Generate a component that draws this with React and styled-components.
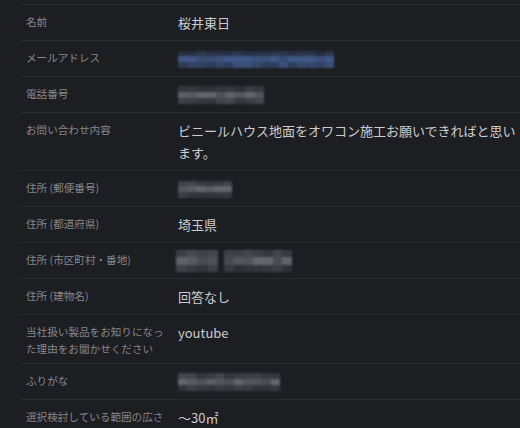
import React from "react";
import styled, { createGlobalStyle } from "styled-components";

const GlobalStyle = createGlobalStyle`
  html, body {
    margin: 0;
    padding: 0;
    background: #1d1e22;
    overflow: hidden;
  }
  body {
    font-family: "Noto Sans CJK JP", "Noto Sans", sans-serif;
  }
`;

// 値を伏せるためのモザイク (行ごとの明るさ × セル)
const makeMosaic = (cols, rows, base, seed) => {
  let s = seed;
  const rnd = () => {
    s = (s * 9301 + 49297) % 233280;
    return s / 233280;
  };
  return rows.map((rowLevel) =>
    Array.from({ length: cols }, () => {
      const v = rowLevel * (0.7 + rnd() * 0.6);
      return `rgba(${base[0]}, ${base[1]}, ${base[2]}, ${Math.min(v, 1).toFixed(2)})`;
    })
  );
};

const gray = [100, 102, 108];

const rows = [
  { label: "名前", value: "桜井東日" },
  {
    label: "メールアドレス",
    mosaic: { w: 156, h: 17, cols: 17, levels: [0.35, 1, 0.7], base: [62, 88, 135], seed: 3 },
  },
  {
    label: "電話番号",
    mosaic: { w: 86, h: 18, cols: 9, levels: [0.35, 0.95, 0.45], base: gray, seed: 7 },
  },
  {
    label: "お問い合わせ内容",
    value: "ビニールハウス地面をオワコン施工お願いできればと思います。",
  },
  {
    label: "住所 (郵便番号)",
    mosaic: { w: 54, h: 17, cols: 6, levels: [0.45, 0.95, 0.35], base: gray, seed: 11 },
  },
  { label: "住所 (都道府県)", value: "埼玉県" },
  {
    label: "住所 (市区町村・番地)",
    mosaics: [
      { w: 42, h: 22, cols: 4, levels: [0.5, 0.9, 0.4], base: gray, seed: 5 },
      { w: 68, h: 22, cols: 7, levels: [0.45, 0.85, 0.35], base: gray, seed: 13 },
    ],
  },
  { label: "住所 (建物名)", value: "回答なし" },
  { label: "当社扱い製品をお知りになった理由をお聞かせください", value: "youtube" },
  {
    label: "ふりがな",
    mosaic: { w: 102, h: 18, cols: 11, levels: [0.45, 0.9, 0.4], base: gray, seed: 17 },
  },
  { label: "選択検討している範囲の広さを記入してください", value: "～30㎡" },
];

const Mosaic = ({ w, h, cols, levels, base, seed }) => {
  const grid = makeMosaic(cols, levels, base, seed);
  return (
    <MosaicBox $w={w} $h={h}>
      {grid.map((line, i) => (
        <MosaicRow key={i}>
          {line.map((c, j) => (
            <Cell key={j} style={{ background: c }} />
          ))}
        </MosaicRow>
      ))}
    </MosaicBox>
  );
};

const App = () => {
  return (
    <>
      <GlobalStyle />
      <List>
        {rows.map((r) => (
          <Row key={r.label}>
            <Label>{r.label}</Label>
            <Value>
              {r.value}
              {r.mosaic && <Mosaic {...r.mosaic} />}
              {r.mosaics && (
                <MosaicGroup>
                  {r.mosaics.map((m, i) => (
                    <Mosaic key={i} {...m} />
                  ))}
                </MosaicGroup>
              )}
            </Value>
          </Row>
        ))}
      </List>
    </>
  );
};

export default App;

const List = styled.div`
  padding: 4px 0 0 20px;
`;

const Row = styled.div`
  display: flex;
  align-items: flex-start;
  border-top: 1px solid #2a2b30;
  padding: 7px 0 6px 0;
`;

const Label = styled.div`
  width: 146px;
  padding-left: 6px;
  margin-right: 6px;
  flex-shrink: 0;
  font-size: 10.6px;
  line-height: 17px;
  color: #85878c;
  padding-top: 1px;
`;

const Value = styled.div`
  flex: 1;
  padding-right: 2px;
  font-size: 13px;
  line-height: 22px;
  color: #cbccd0;
  min-height: 22px;
  display: flex;
  align-items: center;
  flex-wrap: wrap;
`;

const MosaicGroup = styled.div`
  display: flex;
  gap: 6px;
  margin-left: -2px;
`;

const MosaicBox = styled.div`
  width: ${(p) => p.$w}px;
  height: ${(p) => p.$h}px;
  display: flex;
  flex-direction: column;
  filter: blur(1px);
`;

const MosaicRow = styled.div`
  flex: 1;
  display: flex;
  &:nth-child(2) {
    flex: 1.2;
  }
`;

const Cell = styled.div`
  flex: 1;
`;
